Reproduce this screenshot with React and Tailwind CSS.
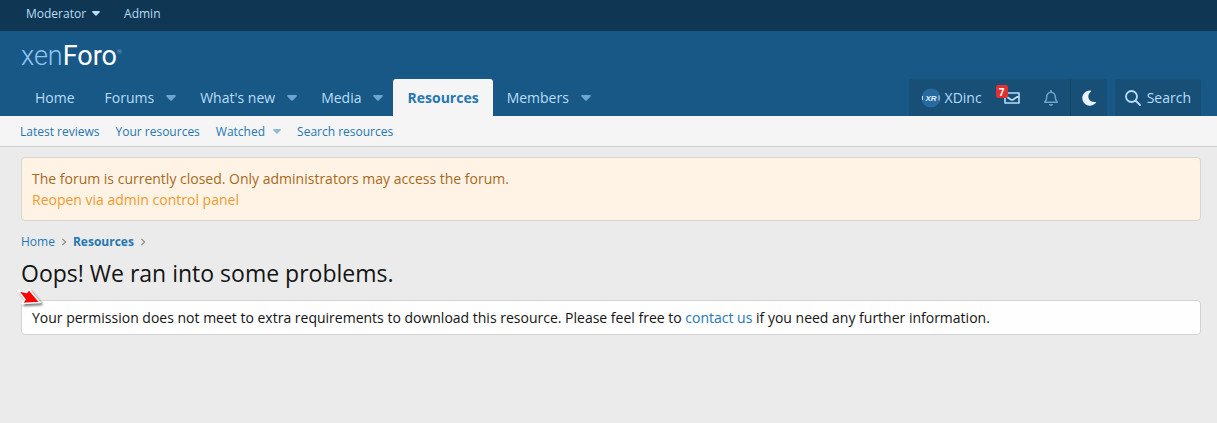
import React from "react";

const tabs = [
  { label: "Home", menu: false },
  { label: "Forums", menu: true },
  { label: "What's new", menu: true },
  { label: "Media", menu: true },
  { label: "Resources", menu: false, active: true },
  { label: "Members", menu: true },
];

const Caret = ({ className }) => (
  <svg viewBox="0 0 10 6" aria-hidden="true" className={className}>
    <path d="M1 0h8c.8 0 1.200.8.600 1.400L5.700 5.500c-.4.400-1 .4-1.400 0L.4 1.400C-.2.800.2 0 1 0z" fill="currentColor" />
  </svg>
);

const Chevron = () => (
  <svg viewBox="0 0 6 10" aria-hidden="true" className="h-2 w-[6px] text-[#8a8a8a]">
    <path d="M1 1l4 4-4 4" fill="none" stroke="currentColor" strokeWidth="1.5" />
  </svg>
);

const Tab = ({ label, menu, active }) => {
  if (active) {
    return (
      <a href="#resources" className="flex h-full items-center rounded-t-[3px] bg-[#f5f5f5] px-[14px] font-bold text-[#2577b1]">
        {label}
      </a>
    );
  }
  return (
    <div className="flex h-full items-center">
      <a href="#tab" className="pl-[14px] pr-3">
        {label}
      </a>
      {menu ? (
        <button type="button" aria-label={`Open ${label} menu`} className="pr-[10px] text-[#6da5d0]">
          <Caret className="h-[6px] w-[10px]" />
        </button>
      ) : (
        <span className="w-1" />
      )}
    </div>
  );
};

const App = () => {
  return (
    <div className="min-h-screen bg-[#ebebeb] font-['Open_Sans',sans-serif] text-sm leading-[21px] text-[#141414]">
      {/* Staff bar */}
      <div className="flex h-[31px] items-center gap-6 bg-[#0f3652] pb-1 pl-[26px] text-xs text-[#b9ddf7]">
        <button type="button" className="flex items-center gap-[6px]">
          Moderator
          <Caret className="h-[5px] w-2" />
        </button>
        <a href="#admin">Admin</a>
      </div>

      <header className="bg-[#185886] pl-[21px] pr-4">
        <a href="#home" className="flex h-12 items-center pt-[2px] font-[Roboto] text-[27px] font-light leading-none text-[#8fc6f3]">
          xen<span className="font-normal text-white">Foro</span>
          <span className="mb-2 text-[6px]">®</span>
        </a>

        <div className="flex h-[37px] items-center justify-between text-[#b9ddf7]">
          <nav className="flex h-full items-center">
            {tabs.map((tab) => (
              <Tab key={tab.label} {...tab} />
            ))}
          </nav>

          <div className="flex h-full items-center gap-2">
            <div className="flex h-full items-center rounded-t-[3px] bg-[#174f77]">
              <a href="#account" className="flex h-full items-center gap-1 pl-3 pr-[10px]">
                <svg viewBox="0 0 20 20" aria-hidden="true" className="size-5">
                  <circle cx="10" cy="10" r="9.500" fill="#276aa0" />
                  <text x="10" y="13" textAnchor="middle" fontFamily="Liberation Sans" fontWeight="bold" fontStyle="italic" fontSize="8" fill="#e4f3ff">
                    XR
                  </text>
                  <path d="M1.500 8v4M18 7.500v5" stroke="#b9ddf7" strokeWidth="1" />
                </svg>
                XDinc
              </a>
              <a href="#conversations" aria-label="Conversations" className="relative flex h-full items-center px-3">
                <svg viewBox="0 0 16 12" aria-hidden="true" className="h-3 w-4">
                  <path d="M1 1h14v10H1zM1 3.500l5.700 4c.8.600 1.800.6 2.600 0l5.700-4" fill="none" stroke="currentColor" strokeWidth="1.600" strokeLinejoin="round" />
                </svg>
                <span className="absolute left-1 top-[6px] flex h-[13px] w-3 items-center justify-center rounded-xs bg-[#e03030] text-[10px] font-bold leading-none text-white">
                  7
                </span>
              </a>
              <button type="button" aria-label="Alerts" className="flex h-full items-center px-3 text-[#6ea3cc]">
                <svg viewBox="0 0 448 512" aria-hidden="true" className="h-4 w-[14px]">
                  <path d="M439.390 362.290c-19.320-20.760-55.470-51.990-55.470-154.290 0-77.700-54.480-139.900-127.940-155.160V32c0-17.670-14.320-32-31.980-32s-31.980 14.330-31.980 32v20.840C118.560 68.100 64.080 130.300 64.080 208c0 102.300-36.150 133.530-55.470 154.290-6 6.450-8.660 14.160-8.610 21.710.11 16.400 12.980 32 32.100 32h383.800c19.120 0 32-15.600 32.100-32 .05-7.550-2.610-15.270-8.610-21.710zM67.530 368c21.220-27.970 44.420-74.330 44.530-159.420 0-.2-.06-.38-.06-.58 0-61.860 50.140-112 112-112s112 50.140 112 112c0 .2-.06.38-.06.58.11 85.100 23.310 131.460 44.530 159.420H67.530zM224 512c35.320 0 63.970-28.650 63.970-64H160.030c0 35.350 28.650 64 63.970 64z" fill="currentColor" />
                </svg>
              </button>
              <button type="button" aria-label="Dark mode" className="flex h-full items-center border-l border-[#144669] px-[10px] text-[#e8f4ff]">
                <svg viewBox="0 0 16 16" aria-hidden="true" className="size-4">
                  <path d="M9.500.5A7.600 7.600 0 1 0 15 12.600c.3-.4 0-.8-.5-.7C8 13 4.700 6 9.900 1.400c.4-.4.2-.9-.4-.9z" fill="currentColor" />
                </svg>
              </button>
            </div>
            <button type="button" className="flex h-full items-center gap-[6px] rounded-t-[3px] bg-[#174f77] px-[10px]">
              <svg viewBox="0 0 16 16" aria-hidden="true" className="size-4">
                <path d="M12 6.500a5.500 5.500 0 1 1-11 0a5.500 5.500 0 0 1 11 0zM10.500 10.500l4.500 4.500" fill="none" stroke="currentColor" strokeWidth="1.800" strokeLinecap="round" />
              </svg>
              Search
            </button>
          </div>
        </div>
      </header>

      {/* Section links */}
      <nav className="flex h-[31px] items-center gap-4 border-b border-[#cccfcf] bg-[#f5f5f5] pl-5 pt-px text-xs text-[#2577b1]">
        <a href="#latest">Latest reviews</a>
        <a href="#yours">Your resources</a>
        <div className="flex items-center gap-2">
          <a href="#watched">Watched</a>
          <button type="button" aria-label="Open Watched menu" className="text-[#8fbadb]">
            <Caret className="h-[5px] w-2" />
          </button>
        </div>
        <a href="#search">Search resources</a>
      </nav>

      <main className="pl-[21px] pr-4 pt-[10px]">
        <div className="rounded-[4px] border border-[#d8d4ce] bg-[#fff3e5] px-[10px] py-[10px] text-[#a66a1d]">
          <p>The forum is currently closed. Only administrators may access the forum.</p>
          <a href="#reopen" className="block text-[#f19a2c]">
            Reopen via admin control panel
          </a>
        </div>

        <nav aria-label="Breadcrumb" className="mt-[11px] flex items-center gap-[6px] text-xs leading-5 text-[#2577b1]">
          <a href="#home">Home</a>
          <Chevron />
          <a href="#resources" className="font-bold">
            Resources
          </a>
          <Chevron />
        </nav>

        <h1 className="mt-[3px] text-[23px] leading-9">Oops! We ran into some problems.</h1>

        <div className="relative mt-[9px] rounded-[4px] border border-[#d3d3d3] bg-[#fefefe] px-[10px] py-[6px]">
          <p>
            Your permission does not meet to extra requirements to download this resource. Please feel free to{" "}
            <a href="#contact" className="text-[#2577b1]">
              contact us
            </a>{" "}
            if you need any further information.
          </p>
          <svg viewBox="0 0 28 22" aria-hidden="true" className="absolute -left-[5px] -top-[13px] h-[22px] w-7 drop-shadow-[2px_2px_1px_rgba(0,0,0,0.5)]">
            <path d="M1 2.500l8.500 2L12 1.500l11 13-18 1 3-4z" fill="#ff0000" stroke="#ffffff" strokeWidth="1.500" strokeLinejoin="round" />
          </svg>
        </div>
      </main>
    </div>
  );
};

export default App;
